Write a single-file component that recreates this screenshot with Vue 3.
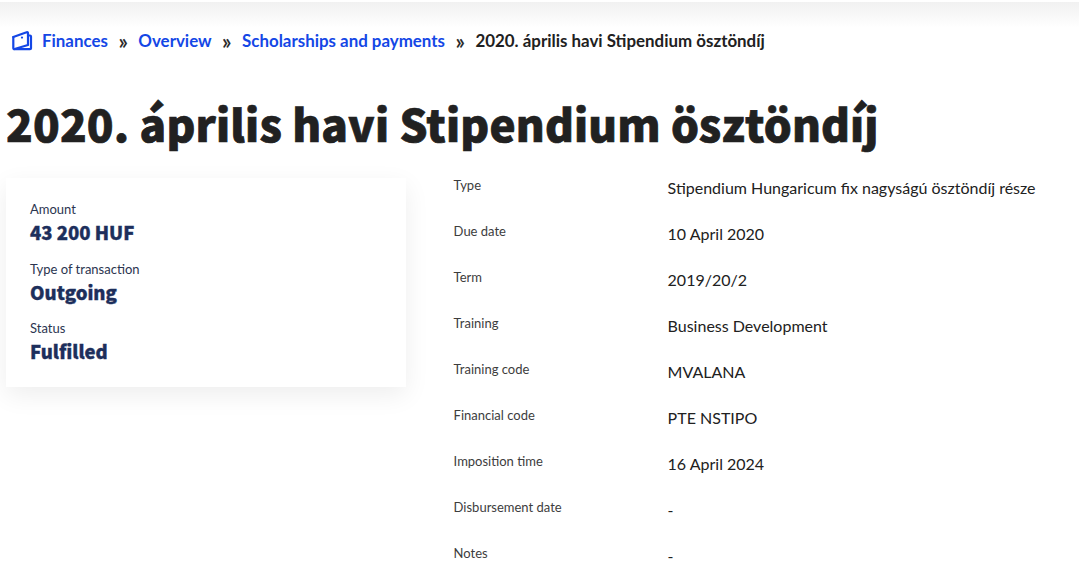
<script setup>
const crumbs = ['Finances', 'Overview', 'Scholarships and payments']
const stats = [
  { label: 'Amount', value: '43 200 HUF' },
  { label: 'Type of transaction', value: 'Outgoing' },
  { label: 'Status', value: 'Fulfilled' },
]
const rows = [
  ['Type', 'Stipendium Hungaricum fix nagyságú ösztöndíj része'],
  ['Due date', '10 April 2020'],
  ['Term', '2019/20/2'],
  ['Training', 'Business Development'],
  ['Training code', 'MVALANA'],
  ['Financial code', 'PTE NSTIPO'],
  ['Imposition time', '16 April 2024'],
  ['Disbursement date', '-'],
  ['Notes', '-'],
]
</script>

<template>
  <div class="page">
    <div class="topbar"></div>
    <nav class="crumbs">
      <svg class="wallet" width="22" height="22" viewBox="0 0 22 22" fill="none" stroke="#1447e6" stroke-width="2.2" stroke-linejoin="round" stroke-linecap="round">
        <path d="M2.3 8 15.6 3.2a1 1 0 0 1 1.4.9V16L3.5 20" />
        <path d="M2.3 8V19a1.2 1.2 0 0 0 1.2 1.2H19a1 1 0 0 0 1-1V7.5a1 1 0 0 0-1-1H17" />
        <circle cx="11" cy="8.6" r="1.1" fill="#1447e6" stroke="none" />
      </svg>
      <template v-for="c in crumbs" :key="c">
        <a class="link">{{ c }}</a>
        <span class="sep">»</span>
      </template>
      <span class="current">2020. április havi Stipendium ösztöndíj</span>
    </nav>
    <h1>2020. április havi Stipendium ösztöndíj</h1>
    <div class="content">
      <section class="card">
        <div v-for="s in stats" :key="s.label" class="stat">
          <div class="label">{{ s.label }}</div>
          <div class="value">{{ s.value }}</div>
        </div>
      </section>
      <dl class="details">
        <div v-for="r in rows" :key="r[0]" class="row">
          <dt>{{ r[0] }}</dt>
          <dd>{{ r[1] }}</dd>
        </div>
      </dl>
    </div>
  </div>
</template>

<style>
html, body { background: #fff; overflow: hidden; }
</style>

<style scoped>
.page { height: 570px; overflow: hidden; font-family: Lato, sans-serif; color: #212121; }
.topbar { height: 26px; margin-top: 2px; background: linear-gradient(#f1f1f1, #fff); }
.crumbs { display: flex; align-items: center; height: 24px; padding-left: 11px; font-size: 16.9px; font-weight: 700; }
.wallet { margin-right: 9px; flex: none; }
.link { color: #1447e6; }
.sep { margin: 0 10.5px; color: #212121; font-size: 22px; font-weight: 400; -webkit-text-stroke: .3px #212121; }
.current { color: #212121; }
h1 { margin: 36px 0 0 6px; height: 71px; font: 900 44px/71px "Noto Sans CJK JP", sans-serif; letter-spacing: .15px; color: #212121; -webkit-text-stroke: .7px #212121; }
.content { display: flex; margin-top: 18px; }
.card { width: 400px; height: 209px; margin: 1px 0 0 6px; padding: 22px 24px 0; box-sizing: border-box; background: #fff; box-shadow: 0 8px 24px rgba(0,0,0,.07); flex: none; }
.stat { margin-bottom: 13.5px; }
.label { font-size: 13px; line-height: 18px; color: #2b3550; }
.value { font: 900 18.5px/28px "Noto Sans CJK JP", sans-serif; color: #1d2f5c; -webkit-text-stroke: .35px #1d2f5c; }
.details { margin: 0 0 0 47.6px; flex: 1; }
.row { display: flex; height: 46px; }
dt { width: 214px; font-size: 13px; line-height: 16px; color: #3d3d3d; flex: none; }
dd { margin: 0; padding-top: 1px; font-size: 16px; line-height: 20px; color: #212121; white-space: nowrap; }
</style>
